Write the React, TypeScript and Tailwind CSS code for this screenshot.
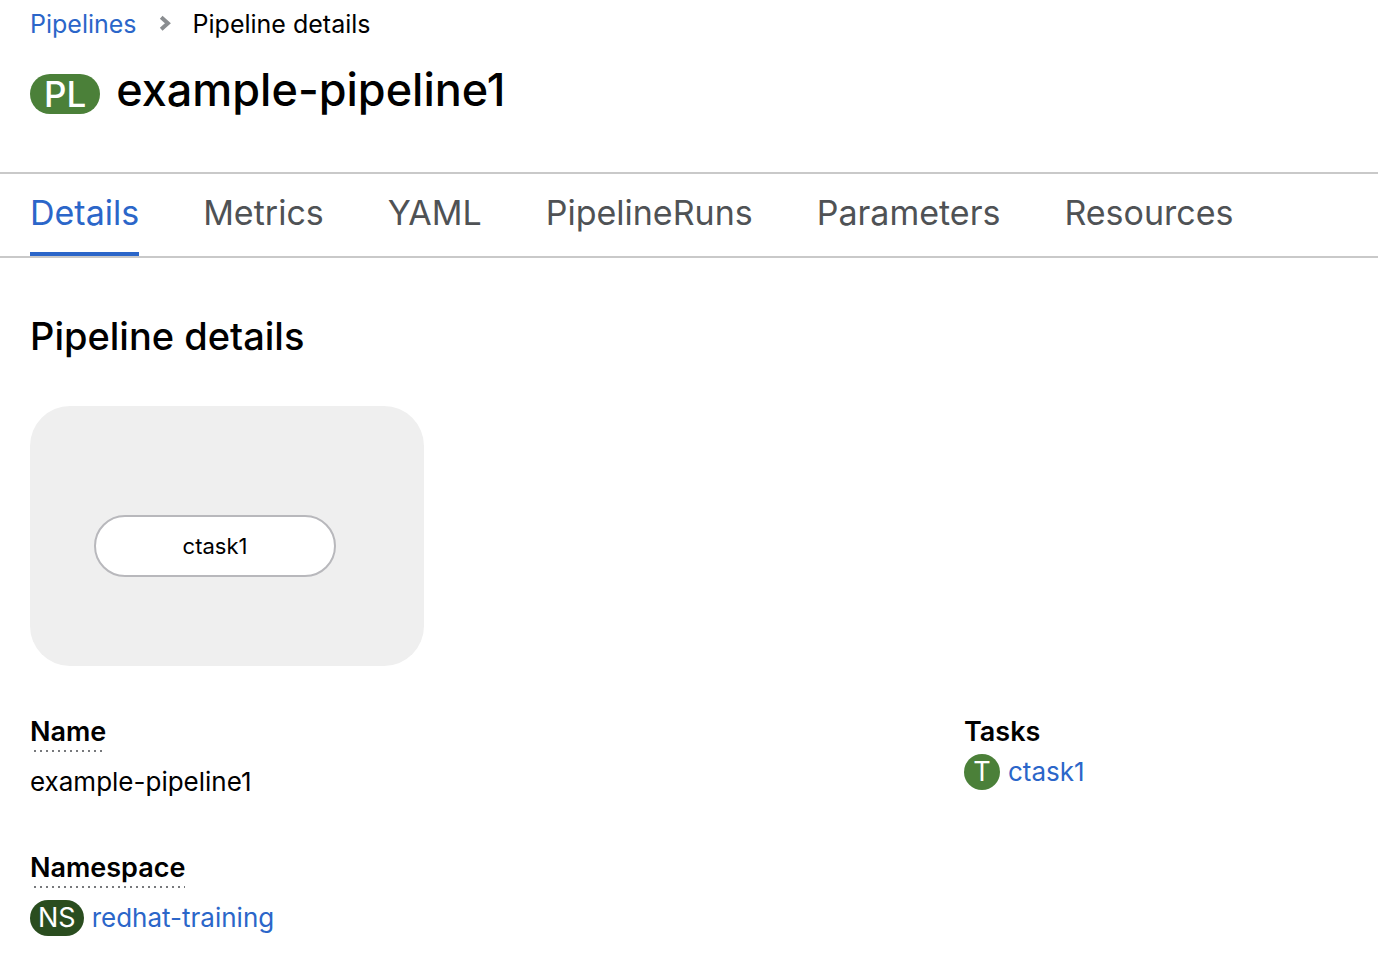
import React, { useState } from "react";

const tabs = ["Details", "Metrics", "YAML", "PipelineRuns", "Parameters", "Resources"];

function Term({ children }: { children: React.ReactNode }) {
  return (
    <dt className="flex">
      <span className="bg-[linear-gradient(90deg,transparent_4px,#77797c_4px)] bg-[length:6px_2px] bg-bottom-left bg-repeat-x pb-0.5 text-[27px] leading-9 font-semibold">
        {children}
      </span>
    </dt>
  );
}

export default function App() {
  const [active, setActive] = useState("Details");

  return (
    <main className="min-h-screen bg-white pb-7 font-['Inter','Liberation_Sans',sans-serif] text-black">
      <header className="px-[30px] pt-1">
        <nav aria-label="Breadcrumb">
          <ol className="flex items-center text-[25px] leading-10">
            <li>
              <a href="#pipelines" className="text-[#2b66c9]">Pipelines</a>
            </li>
            <li aria-hidden="true" className="px-[22px]">
              <svg className="h-[18px] w-3" viewBox="0 0 12 18" fill="none">
                <path d="M2.200 2.200 8.900 8.200 2.200 14.200" stroke="#8a8d90" strokeWidth="4" />
              </svg>
            </li>
            <li aria-current="page">Pipeline details</li>
          </ol>
        </nav>
        <h1 className="mt-4 flex items-center gap-4 pb-[52px] text-[45px] leading-[60px] font-medium">
          <span className="mt-2 flex h-10 items-center rounded-full bg-[#4b8039] px-3.5 text-[35px] leading-10 text-white">
            PL
          </span>
          example-pipeline1
        </h1>
      </header>

      <div role="tablist" className="flex gap-16 border-y-2 border-[#c9c9c9] px-[30px]">
        {tabs.map((tab) => (
          <button
            key={tab}
            type="button"
            role="tab"
            aria-selected={tab === active}
            onClick={() => setActive(tab)}
            className={
              tab === active
                ? "h-[82px] border-b-4 border-[#2b66c9] text-[34px] leading-[78px] text-[#2b66c9]"
                : "h-[82px] border-b-4 border-transparent text-[34px] leading-[78px] text-[#4f5255]"
            }
          >
            {tab}
          </button>
        ))}
      </div>

      <section className="px-[30px] pt-[52px]">
        <h2 className="text-[38px] leading-[52px] font-medium">Pipeline details</h2>

        <div className="mt-11 flex h-[260px] w-[394px] items-center rounded-[40px] bg-[#efefef] pt-5 pl-16">
          <button
            type="button"
            className="h-[62px] w-[242px] rounded-full border-2 border-[#b8b8bc] bg-white text-[22px]"
          >
            ctask1
          </button>
        </div>

        <div className="mt-12 grid grid-cols-[minmax(0,934fr)_minmax(0,384fr)]">
          <dl>
            <Term>Name</Term>
            <dd className="mt-3 text-[26px] leading-9">example-pipeline1</dd>
            <div className="mt-[50px]">
              <Term>Namespace</Term>
              <dd className="mt-3 flex items-center gap-2 text-[26px] leading-9">
                <span className="flex h-9 items-center rounded-full bg-[#2a4d1f] px-2 text-[27px] text-white">NS</span>
                <a href="#redhat-training" className="text-[#2b66c9]">redhat-training</a>
              </dd>
            </div>
          </dl>
          <dl>
            <dt className="text-[27px] leading-9 font-semibold">Tasks</dt>
            <dd className="mt-1 flex items-center gap-2 text-[26px] leading-9">
              <span className="flex size-9 items-center justify-center rounded-full bg-[#4b8039] text-[27px] text-white">T</span>
              <a href="#ctask1" className="text-[#2b66c9]">ctask1</a>
            </dd>
          </dl>
        </div>
      </section>
    </main>
  );
}
